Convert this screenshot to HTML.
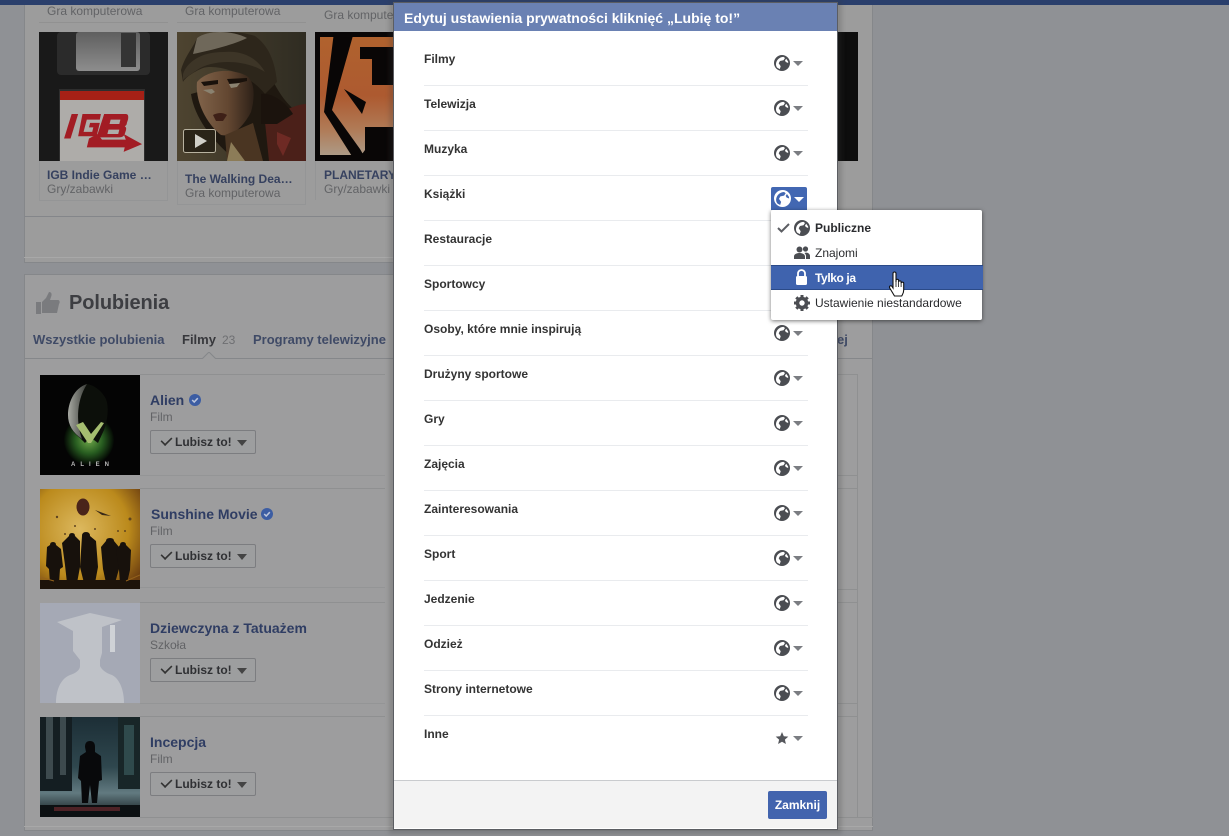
<!DOCTYPE html>
<html lang="pl"><head><meta charset="utf-8"><title>Polubienia</title>
<style>
html,body{margin:0;padding:0}
body{width:1229px;height:836px;overflow:hidden;position:relative;background:#8f9195;font-family:"Liberation Sans",sans-serif;font-size:12px}
.a{position:absolute;white-space:nowrap}
.b{position:absolute}
svg{display:block;position:absolute;overflow:hidden}
.t{font-weight:bold;color:#36415f;font-size:12px;line-height:14px}
.s{color:#626366;font-size:12px;line-height:14px}
.n{font-weight:bold;color:#2f3d63;font-size:14px;line-height:16px}
.tab{font-weight:bold;color:#3f4a66;font-size:13px;line-height:16px}
.lb{position:absolute;left:150px;width:104px;height:22px;border:1px solid #7c7d80;border-radius:2px;background:#9d9e9f;color:#2f3033;font-weight:bold;font-size:12px;line-height:22px}
.lb span{position:absolute;left:24px}
.lb i{position:absolute;left:86px;top:9px;border:5px solid transparent;border-top:6px solid #444;border-bottom:0}
.lb u{position:absolute;left:9px;top:5px;width:11px;height:6px;border:solid #333;border-width:0 0 2px 2px;transform:rotate(-45deg) scale(.8);}
.l{position:absolute;left:424px;font-weight:bold;color:#333;font-size:12px;line-height:14px;white-space:nowrap}
.h{position:absolute;left:424px;width:384px;height:1px;background:#e9ebee}
.car{position:absolute;left:793px;border:5px solid transparent;border-top:5px solid #7b7d82;border-bottom:0}
.m{position:absolute;left:815px;font-size:12px;line-height:14px;color:#2a2b2e;white-space:nowrap}
.ln{position:absolute;height:1px;background:#8f9091}
.vl{position:absolute;width:1px;background:#949596}
</style></head><body>
<svg width="0" height="0" style="position:absolute"><defs>
<g id="gl"><circle cx="8" cy="8" r="8" fill="#4b4d52"/><path d="M9.500 1.900C6.500 2 3.800 3.800 2.600 6.500 1.500 9 2 11.300 3.300 12.800L5.800 14.100 6.700 11.200 4.700 8.300 6 6 9.500 5.300 11 3Z" fill="#fff"/><path d="M12.200 3.800L14.100 6.500 14.200 8 11.800 7 11 5.500Z" fill="#fff"/></g>
</defs></svg>

<div class="b" style="left:24px;top:-2px;width:849px;height:265px;background:#9c9c9c;border:1px solid #85878a;box-sizing:border-box"></div>
<div class="b" style="left:0;top:0;width:1229px;height:5px;background:#2a3f6c"></div>
<div class="b" style="left:24px;top:216px;width:826px;height:1px;background:#84868a"></div>
<div class="b" style="left:24px;top:257px;width:849px;height:1px;background:#a8a8a8"></div>

<div class="s a" style="left:47px;top:4px">Gra komputerowa</div>
<div class="s a" style="left:185px;top:4px">Gra komputerowa</div>
<div class="s a" style="left:324px;top:8px">Gra komputerowa</div>
<div class="b" style="left:39px;top:22px;width:129px;height:1px;background:#919191"></div>
<div class="b" style="left:177px;top:22px;width:129px;height:1px;background:#919191"></div>
<div class="vl" style="left:39px;top:161px;height:39px"></div>
<div class="vl" style="left:167px;top:161px;height:39px"></div>
<div class="vl" style="left:177px;top:161px;height:43px"></div>
<div class="vl" style="left:305px;top:161px;height:43px"></div>
<div class="vl" style="left:315px;top:161px;height:39px"></div>
<div class="ln" style="left:39px;top:200px;width:129px;background:#949596"></div>
<div class="ln" style="left:177px;top:204px;width:129px;background:#949596"></div>

<!-- tiles -->
<svg style="left:39px;top:32px" width="129" height="129" viewBox="0 0 129 129"><defs><linearGradient id="fl" x1="0" y1="0" x2="0" y2="1"><stop offset="0" stop-color="#5f5f5f"/><stop offset="1" stop-color="#8d8d8d"/></linearGradient></defs><rect width="129" height="129" fill="#191919"/><rect x="18" width="93" height="43" rx="4" fill="#2b2b2b"/><rect x="37" width="64" height="39" rx="3" fill="url(#fl)"/><rect x="82" y="1" width="15" height="34" fill="#343434"/><rect x="20" y="57" width="86" height="72" fill="#2e2e2e"/><rect x="21" y="59" width="84" height="70" fill="#aeaca9"/><rect x="21" y="59" width="84" height="9" fill="#a62016"/><g fill="#a21c24" transform="translate(-2,1.800) scale(1.083,1.114)"><path d="M32 72h6l-7 22h-6z"/><path d="M42 72h17l-1 5H46l-3 11h8l1-4h-4l1-4h9l-3 12H38z"/><path d="M62 72h20q3 0 2 5l-1 3q0 2-2 3 2 1 1 4l-1 3q-1 3-5 3H55zm6 5l-1 4h9l1-4zm-2 9l-1 4h10l1-4z"/><path d="M48 94l8-4 4 5h22l-2-5 17 9-17 7 1-4H46z"/></g></svg>

<svg style="left:177px;top:32px" width="129" height="129" viewBox="0 0 129 129"><defs><linearGradient id="bg1" x1="0" x2="1" y1="0" y2="0"><stop offset="0" stop-color="#4e4430"/><stop offset="1" stop-color="#2f2c22"/></linearGradient><linearGradient id="fc" x1="0" x2="1" y1="0" y2="0"><stop offset="0" stop-color="#80634a"/><stop offset=".55" stop-color="#634731"/><stop offset="1" stop-color="#2e2118"/></linearGradient></defs><rect width="129" height="129" fill="url(#bg1)"/><path d="M14 62C18 90 42 115 60 129H129V84C114 80 100 60 92 40Z" fill="#1f1810"/><path d="M4 38C8 24 16 16 20 6 30-2 60-2 78 4 92 14 98 30 100 50L88 62C70 40 40 32 26 36 16 40 8 46 6 50Z" fill="#2d261b"/><path d="M20 6C30-2 55-2 70 6 58 12 36 18 16 22Z" fill="#6f685a"/><path d="M6 42C10 30 24 20 46 20 66 18 80 26 88 40 66 26 34 28 20 38 14 42 8 46 6 48Z" fill="#3d3527"/><path d="M20 50C28 40 50 34 70 44 78 50 78 66 74 80 68 92 56 106 44 103 30 92 18 70 20 50Z" fill="url(#fc)"/><path d="M24 50l17-2 0 4-14 2zM50 47l20-1 0 3-17 4z" fill="#19110b"/><path d="M26 58l9-1 3 3-4 2zM52 52l11-1-3 4-6 1z" fill="#8a8270"/><path d="M36 83q8-4 14 0l-4 6h-7z" fill="#3e2017"/><path d="M48 103l28-12 10 38H50z" fill="#4a3522"/><path d="M54 110l14 19H50z" fill="#8c7c58"/><path d="M88 90C100 82 118 72 129 72V129H92Z" fill="#4b2019"/><path d="M100 100l14 6-8 18-6-12z" fill="#6e2a24"/><path d="M84 62C92 60 108 68 116 82L100 92 84 92Z" fill="#1b130d"/><rect x="6.500" y="97.500" width="32" height="23" rx="2" fill="#2a2418" stroke="#b8b2a0"/><path d="M18 102l12 7-12 7z" fill="#d0cfc8"/></svg>

<svg style="left:315px;top:32px" width="79" height="129" viewBox="0 0 79 129"><rect width="79" height="129" fill="#090606"/><defs><linearGradient id="o" x1="0" y1="0" x2="0" y2="1"><stop offset="0" stop-color="#b0622e"/><stop offset=".5" stop-color="#ad5a30"/><stop offset=".78" stop-color="#b07a56"/><stop offset="1" stop-color="#ad9a86"/></linearGradient></defs><rect x="5" y="5" width="74" height="118" fill="url(#o)"/><path d="M19 0H39L17 78 45 117 52 129H40L9 80Z" fill="#090606"/><path d="M45 15H79V53H57V27H45Z" fill="#090606"/><path d="M29 57L51 70 47 82Z" fill="#090606"/><path d="M50 95H79V129H42L50 118Z" fill="#090606"/></svg>

<div class="b" style="left:837px;top:32px;width:21px;height:129px;background:#0d0d0d"></div>

<div class="t a" style="left:47px;top:168px;width:112px;overflow:hidden">IGB Indie Game …</div>
<div class="s a" style="left:47px;top:182px">Gry/zabawki</div>
<div class="t a" style="left:185px;top:172px">The Walking Dea…</div>
<div class="s a" style="left:185px;top:186px">Gra komputerowa</div>
<div class="t a" style="left:324px;top:168px;width:70px;overflow:hidden">PLANETARY</div>
<div class="s a" style="left:324px;top:182px">Gry/zabawki</div>

<!-- likes card -->
<div class="b" style="left:24px;top:274px;width:849px;height:557px;background:#9d9d9e;border:1px solid #85878a;box-sizing:border-box"></div>
<svg style="left:35px;top:291px" width="25" height="24" viewBox="0 0 25 24"><path d="M1 11h5v12H1zM7 11l4-4 3-6c3 0 3 3 2 5l-1 3h8c2 0 2 3 1 4l-2 9H7z" fill="#7a7b7e"/></svg>
<div class="a" style="left:69px;top:291px;font-size:20px;line-height:24px;font-weight:bold;color:#3d3e42;letter-spacing:-.1px">Polubienia</div>
<div class="tab a" style="left:33px;top:332px">Wszystkie polubienia</div>
<div class="tab a" style="left:182px;top:332px;color:#37383c">Filmy</div>
<div class="a" style="left:222px;top:333px;font-size:12px;line-height:14px;color:#6e6f72">23</div>
<div class="tab a" style="left:253px;top:332px">Programy telewizyjne</div>
<div class="tab a" style="left:837px;top:332px">ej</div>
<div class="b" style="left:24px;top:358px;width:849px;height:1px;background:#85878a"></div>
<svg style="left:202px;top:352px" width="14" height="7" viewBox="0 0 14 7"><path d="M0 7L7 0 14 7" fill="#9d9d9e" stroke="#85878a"/></svg>

<div class="ln" style="left:140px;top:374px;width:245px"></div>
<div class="ln" style="left:140px;top:475px;width:245px;background:#949596"></div>
<div class="ln" style="left:140px;top:488px;width:245px"></div>
<div class="ln" style="left:140px;top:587px;width:245px;background:#949596"></div>
<div class="ln" style="left:140px;top:602px;width:245px"></div>
<div class="ln" style="left:140px;top:703px;width:245px;background:#949596"></div>
<div class="ln" style="left:140px;top:716px;width:245px"></div>
<div class="ln" style="left:140px;top:817px;width:733px"></div>
<div class="ln" style="left:24px;top:826px;width:849px;background:#a8a8a8"></div>
<div class="ln" style="left:837px;top:374px;width:20px"></div>
<div class="ln" style="left:837px;top:475px;width:20px"></div>
<div class="ln" style="left:837px;top:488px;width:20px"></div>
<div class="ln" style="left:837px;top:589px;width:20px"></div>
<div class="ln" style="left:837px;top:602px;width:20px"></div>
<div class="ln" style="left:837px;top:703px;width:20px"></div>
<div class="ln" style="left:837px;top:716px;width:20px"></div>
<div class="b" style="left:857px;top:374px;width:1px;height:443px;background:#8f9091"></div>

<!-- posters -->
<svg style="left:40px;top:375px" width="100" height="100" viewBox="0 0 100 100"><defs><radialGradient id="gr" cx=".5" cy=".5" r=".5"><stop offset="0" stop-color="#6fa84a"/><stop offset=".55" stop-color="#275c20"/><stop offset="1" stop-color="#040804"/></radialGradient><linearGradient id="mo" x1="0" x2="1" y1="0" y2="0"><stop offset="0" stop-color="#a7a9a2"/><stop offset="1" stop-color="#3a3c38"/></linearGradient></defs><rect width="100" height="100" fill="#040404"/><ellipse cx="49" cy="65" rx="25" ry="25" fill="url(#gr)"/><path d="M47 9C34 13 28 28 28 40 28 50 33 58 40 63L45 68 50 62 58 68 64 55C68 44 69 32 66 24 62 16 54 10 47 9Z" fill="#0c0f0a"/><path d="M47 9C34 13 28 28 28 40 28 50 33 58 42 64 37 50 35 28 47 9Z" fill="url(#mo)"/><path d="M36 50l12 18 3 0 13-20-3-1-10 12-8-12z" fill="#a5bd70"/><text x="31" y="91" fill="#bbb" font-size="6" letter-spacing="5" font-weight="bold" font-family="Liberation Sans">ALIEN</text></svg>

<svg style="left:40px;top:489px" width="100" height="100" viewBox="0 0 100 100"><defs><radialGradient id="su" cx=".4" cy=".4" r=".75"><stop offset="0" stop-color="#dcb85e"/><stop offset=".65" stop-color="#bb8a1c"/><stop offset="1" stop-color="#6d3f10"/></radialGradient></defs><rect width="100" height="100" fill="url(#su)"/><ellipse cx="43" cy="18" rx="6.500" ry="8.500" fill="#4a241a"/><path d="M55 21l16 6-9-1z" fill="#3a2a18"/><g fill="#5f4420"><circle cx="17" cy="28" r="1.200"/><circle cx="90" cy="30" r="1.500"/><circle cx="35" cy="37" r="1"/><circle cx="55" cy="40" r="1"/><circle cx="85" cy="42" r="1"/><circle cx="25" cy="45" r="1"/><circle cx="78" cy="42" r="1"/></g><g fill="#17110c"><path d="M10 56q0-3 3-3t3 3l5 4 2 18-3 2-1 14h-9l-1-14-3-3 1-19z"/><path d="M29 47q0-3 3-3t3 3l5 5v26l-3 16H27l-2-18-3-22z"/><path d="M42 47q0-4 4-4t4 4l6 5 2 26-3 16H44l-4-16z"/><path d="M66 52q0-3 4-3t4 3l5 6 0 22-4 14h-9l-3-14-2-22z"/><path d="M80 56q0-3 3-3t3 3l5 5-1 20-3 13h-7l-1-13-3-20z"/></g><rect y="91" width="100" height="9" fill="#1d130a"/><path d="M0 88l14 4M86 92l14-6" stroke="#94621c"/></svg>

<svg style="left:40px;top:603px" width="100" height="100" viewBox="0 0 100 100"><rect width="100" height="100" fill="#a5a9b5"/><path d="M17 19L50 10 82 17 62 24V50L60 57V63C62 67 66 70 72 72 80 76 84 88 84 100H16C16 88 20 76 30 72 36 70 40 67 40 63V57L33 48V28Z" fill="#bfc2c8"/><rect x="70" y="22" width="5" height="27" fill="#cfd2d6"/></svg>

<svg style="left:40px;top:717px" width="100" height="100" viewBox="0 0 100 100"><defs><linearGradient id="in" x1="0" y1="0" x2="0" y2="1"><stop offset="0" stop-color="#1c2e36"/><stop offset=".5" stop-color="#2f474e"/><stop offset=".76" stop-color="#627a80"/><stop offset="1" stop-color="#0e1618"/></linearGradient></defs><rect width="100" height="100" fill="url(#in)"/><path d="M0 0h32v74H0z" fill="#141e22"/><path d="M78 0h22v72H78z" fill="#182628"/><path d="M6 0h7v62H6zM20 0h6v58h-6z" fill="#3d4a4e"/><path d="M84 8h10v50H84z" fill="#2f4a4c"/><path d="M45 30q0-6 5-6t5 6l0 5 6 4 1 24-3 1-2 22h-5l-2-18-2 18h-6l-1-22-3-3 2-22 6-4z" fill="#08090b"/><rect y="88" width="100" height="12" fill="#0c1012"/><rect x="14" y="90" width="66" height="4" fill="#4e2226"/></svg>

<div class="n a" style="left:150px;top:392px">Alien</div>
<svg style="left:189px;top:394px" width="12" height="12" viewBox="0 0 12 12"><circle cx="6" cy="6" r="6" fill="#3c5da3"/><path d="M3.200 6l2 2 3.600-3.800" fill="none" stroke="#bcc6dc" stroke-width="1.500"/></svg>
<div class="s a" style="left:150px;top:410px">Film</div>
<div class="lb" style="top:430px"><u></u><span>Lubisz to!</span><i></i></div>

<div class="n a" style="left:151px;top:506px">Sunshine Movie</div>
<svg style="left:261px;top:508px" width="12" height="12" viewBox="0 0 12 12"><circle cx="6" cy="6" r="6" fill="#3c5da3"/><path d="M3.200 6l2 2 3.600-3.800" fill="none" stroke="#bcc6dc" stroke-width="1.500"/></svg>
<div class="s a" style="left:150px;top:524px">Film</div>
<div class="lb" style="top:544px"><u></u><span>Lubisz to!</span><i></i></div>

<div class="n a" style="left:150px;top:620px">Dziewczyna z Tatuażem</div>
<div class="s a" style="left:150px;top:638px">Szkoła</div>
<div class="lb" style="top:658px"><u></u><span>Lubisz to!</span><i></i></div>

<div class="n a" style="left:150px;top:734px">Incepcja</div>
<div class="s a" style="left:150px;top:752px">Film</div>
<div class="lb" style="top:772px"><u></u><span>Lubisz to!</span><i></i></div>

<!-- modal -->
<div class="b" style="left:389px;top:0;width:453px;height:834px;background:rgba(60,60,60,.22);filter:blur(2px)"></div>
<div class="b" style="left:393px;top:2px;width:445px;height:828px;background:#fff;border:1px solid #5b5d62;box-sizing:border-box"></div>
<div class="b" style="left:394px;top:3px;width:443px;height:28px;background:#6a81b3"></div>
<div class="a" style="left:404px;top:10px;font-size:14px;line-height:16px;font-weight:bold;color:#fff">Edytuj ustawienia prywatności kliknięć „Lubię to!”</div>

<div class="l" style="top:52px">Filmy</div>
<div class="h" style="top:85px"></div>
<div class="l" style="top:97px">Telewizja</div>
<div class="h" style="top:130px"></div>
<div class="l" style="top:142px">Muzyka</div>
<div class="h" style="top:175px"></div>
<div class="l" style="top:187px">Książki</div>
<div class="h" style="top:220px"></div>
<div class="l" style="top:232px">Restauracje</div>
<div class="h" style="top:265px"></div>
<div class="l" style="top:277px">Sportowcy</div>
<div class="h" style="top:310px"></div>
<div class="l" style="top:322px">Osoby, które mnie inspirują</div>
<div class="h" style="top:355px"></div>
<div class="l" style="top:367px">Drużyny sportowe</div>
<div class="h" style="top:400px"></div>
<div class="l" style="top:412px">Gry</div>
<div class="h" style="top:445px"></div>
<div class="l" style="top:457px">Zajęcia</div>
<div class="h" style="top:490px"></div>
<div class="l" style="top:502px">Zainteresowania</div>
<div class="h" style="top:535px"></div>
<div class="l" style="top:547px">Sport</div>
<div class="h" style="top:580px"></div>
<div class="l" style="top:592px">Jedzenie</div>
<div class="h" style="top:625px"></div>
<div class="l" style="top:637px">Odzież</div>
<div class="h" style="top:670px"></div>
<div class="l" style="top:682px">Strony internetowe</div>
<div class="h" style="top:715px"></div>
<div class="l" style="top:727px">Inne</div>

<svg style="left:774px;top:55px" width="16" height="16" viewBox="0 0 16 16"><use href="#gl"/></svg><div class="car" style="top:61px"></div>
<svg style="left:774px;top:100px" width="16" height="16" viewBox="0 0 16 16"><use href="#gl"/></svg><div class="car" style="top:106px"></div>
<svg style="left:774px;top:145px" width="16" height="16" viewBox="0 0 16 16"><use href="#gl"/></svg><div class="car" style="top:151px"></div>
<svg style="left:774px;top:325px" width="16" height="16" viewBox="0 0 16 16"><use href="#gl"/></svg><div class="car" style="top:331px"></div>
<svg style="left:774px;top:370px" width="16" height="16" viewBox="0 0 16 16"><use href="#gl"/></svg><div class="car" style="top:376px"></div>
<svg style="left:774px;top:415px" width="16" height="16" viewBox="0 0 16 16"><use href="#gl"/></svg><div class="car" style="top:421px"></div>
<svg style="left:774px;top:460px" width="16" height="16" viewBox="0 0 16 16"><use href="#gl"/></svg><div class="car" style="top:466px"></div>
<svg style="left:774px;top:505px" width="16" height="16" viewBox="0 0 16 16"><use href="#gl"/></svg><div class="car" style="top:511px"></div>
<svg style="left:774px;top:550px" width="16" height="16" viewBox="0 0 16 16"><use href="#gl"/></svg><div class="car" style="top:556px"></div>
<svg style="left:774px;top:595px" width="16" height="16" viewBox="0 0 16 16"><use href="#gl"/></svg><div class="car" style="top:601px"></div>
<svg style="left:774px;top:640px" width="16" height="16" viewBox="0 0 16 16"><use href="#gl"/></svg><div class="car" style="top:646px"></div>
<svg style="left:774px;top:685px" width="16" height="16" viewBox="0 0 16 16"><use href="#gl"/></svg><div class="car" style="top:691px"></div>
<svg style="left:775px;top:731px" width="14" height="14" viewBox="0 0 14 14"><path d="M7 1l1.800 4.200 4.500.4-3.400 3 1 4.400L7 10.700 3.100 13l1-4.400-3.400-3 4.500-.4z" fill="#55575c"/></svg><div class="car" style="top:736px"></div>

<div class="b" style="left:394px;top:780px;width:443px;height:48px;background:#f3f3f3;border-top:1px solid #c9cbce;box-sizing:border-box"></div>
<div class="a" style="left:768px;top:791px;width:59px;height:28px;background:#4264ae;border-radius:2px;color:#fff;font-weight:bold;font-size:12px;line-height:28px;text-align:center">Zamknij</div>

<!-- dropdown -->
<div class="b" style="left:771px;top:187px;width:36px;height:23px;background:#4267b2;border-radius:2px 2px 0 0"></div>
<svg style="left:774px;top:190px" width="17" height="17" viewBox="0 0 16 16"><circle cx="8" cy="8" r="8" fill="#fff"/><path d="M9.500 1.900C6.500 2 3.800 3.800 2.600 6.500 1.500 9 2 11.300 3.300 12.800L5.800 14.100 6.700 11.200 4.700 8.300 6 6 9.500 5.300 11 3Z" fill="#4267b2"/><path d="M12.200 3.800L14.100 6.500 14.200 8 11.800 7 11 5.500Z" fill="#4267b2"/></svg>
<div class="b" style="left:794px;top:197px;border:5px solid transparent;border-top:5px solid #fff;border-bottom:0"></div>

<div class="b" style="left:771px;top:210px;width:211px;height:110px;background:#fff;border-radius:2px;box-shadow:0 1px 4px rgba(0,0,0,.55)"></div>
<div class="b" style="left:771px;top:265px;width:212px;height:25px;background:#3f63ae;border-top:1px solid #2b4a88;border-bottom:1px solid #2b4a88;box-sizing:border-box"></div>

<svg style="left:777px;top:223px" width="13" height="10" viewBox="0 0 13 10"><path d="M1 5l3.500 3.500L12 1" fill="none" stroke="#5c5e63" stroke-width="2"/></svg>
<svg style="left:794px;top:220px" width="16" height="16" viewBox="0 0 16 16"><use href="#gl"/></svg>
<div class="m" style="top:221px;font-weight:bold">Publiczne</div>

<svg style="left:794px;top:246px" width="16" height="13" viewBox="0 0 16 13"><circle cx="5.500" cy="3.500" r="3" fill="#4b4d52"/><circle cx="11.500" cy="3" r="2.600" fill="#4b4d52"/><path d="M0 13V10.500C0 8 3 7 5.500 7S11 8 11 10.500V13ZM12 13V10.500C12 9 11.500 8 10.500 7 13 6 16 7.500 16 10V13Z" fill="#4b4d52"/></svg>
<div class="m" style="top:246px">Znajomi</div>

<svg style="left:795px;top:269px" width="13" height="16" viewBox="0 0 13 16"><path d="M3 7V4.500a3.500 3.500 0 017 0V7" fill="none" stroke="#fff" stroke-width="1.800"/><rect x="1" y="7" width="11" height="9" rx="1.500" fill="#fff"/></svg>
<div class="m" style="top:271px;font-weight:bold;color:#fff;letter-spacing:-.4px">Tylko ja</div>

<svg style="left:794px;top:295px" width="16" height="16" viewBox="0 0 16 16"><circle cx="8" cy="8" r="4.500" fill="none" stroke="#4b4d52" stroke-width="3.600"/><g stroke="#4b4d52" stroke-width="3"><path d="M8 0v3M8 13v3M0 8h3M13 8h3M2.300 2.300l2.200 2.200M11.500 11.500l2.200 2.200M2.300 13.700l2.200-2.200M11.500 4.500l2.200-2.200"/></g></svg>
<div class="m" style="top:296px">Ustawienie niestandardowe</div>

<!-- cursor -->
<svg style="left:888px;top:271px" width="18" height="28" viewBox="0 0 18 28"><path d="M5 2.500c0-2 3-2 3 0V11l0-1.500c0-1.600 2.600-1.600 2.600 0V11c0-1.500 2.500-1.500 2.500 0v1.200c0-1.400 2.600-1.400 2.600 0V19c0 3-1 4-2 6H6.500L2 17.500c-1.500-2.500 1-3.500 2-2l1 1.500z" fill="#fff" stroke="#111" stroke-width="1.100"/><path d="M8 11v5M10.600 11v5M13.100 12v4" stroke="#111" stroke-width=".8"/></svg>
</body></html>
